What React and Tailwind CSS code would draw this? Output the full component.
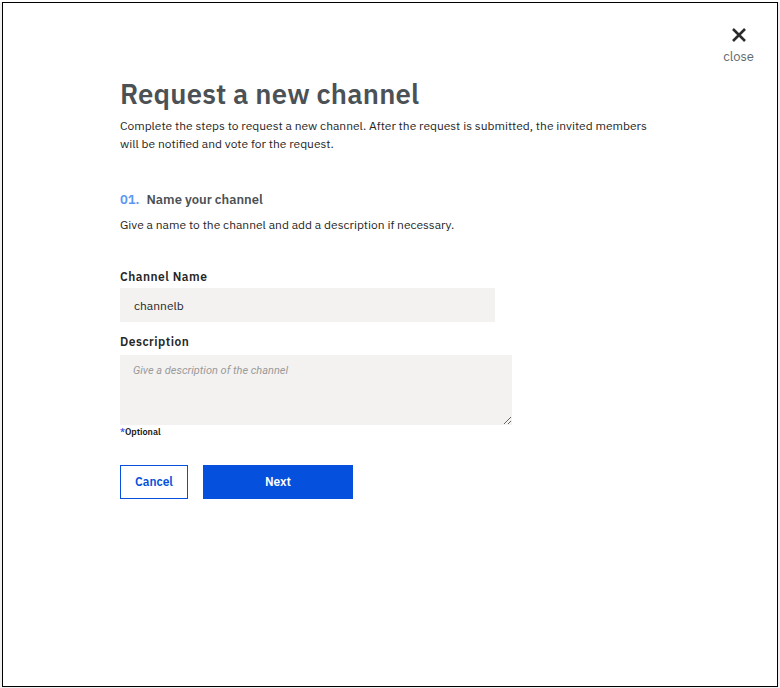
import { useState } from "react";

const font = { fontFamily: "'IBM Plex Sans', 'Noto Sans', Roboto, sans-serif" };

const App = () => {
  const [name, setName] = useState("channelb");
  const [desc, setDesc] = useState("");

  return (
    <div className="w-[780px] h-[688px] bg-[#f0f0f0]" style={font}>
      <div className="relative ml-[2px] mt-[2px] w-[776px] h-[685px] border border-black bg-white">
        {/* close */}
        <button className="absolute right-[23px] top-[22px] flex flex-col items-center text-[#5f6a70]">
          <svg width="16" height="16" viewBox="0 0 16 16" className="mt-[2px]">
            <path d="M2 2 L14 14 M14 2 L2 14" stroke="#2b2b2b" strokeWidth="2.6" />
          </svg>
          <span className="text-[13px] leading-[14px] mt-[7px]">close</span>
        </button>

        <div className="pl-[117px] pt-[74px]">
          <h1 className="text-[27.5px] leading-[34px] font-semibold tracking-[0.2px] text-[#4b5155]">Request a new channel</h1>
          <p className="mt-[6px] w-[540px] text-[12px] leading-[18px] text-[#262626]">
            Complete the steps to request a new channel. After the request is submitted, the invited members will be notified and vote for the request.
          </p>

          <div className="mt-[38px] flex items-baseline gap-[7px] text-[13px] font-semibold leading-[18px]">
            <span className="text-[#5a98f2]">01.</span>
            <span className="text-[#4b5155]">Name your channel</span>
          </div>
          <p className="mt-[8px] text-[12px] leading-[16px] text-[#262626]">
            Give a name to the channel and add a description if necessary.
          </p>

          <form onSubmit={(e) => e.preventDefault()}>
            <label className="mt-[36px] block text-[12px] font-semibold leading-[16px] tracking-[0.5px] text-[#262626]">
              Channel Name
            </label>
            <input
              type="text"
              value={name}
              onChange={(e) => setName(e.target.value)}
              className="mt-[3px] block w-[375px] h-[34px] bg-[#f3f2f1] px-[14px] text-[12px] text-[#262626] outline-none"
            />

            <label className="mt-[12px] block text-[12px] font-semibold leading-[16px] tracking-[0.5px] text-[#262626]">
              Description
            </label>
            <textarea
              value={desc}
              onChange={(e) => setDesc(e.target.value)}
              placeholder="Give a description of the channel"
              className="mt-[5px] block w-[392px] h-[70px] bg-[#f3f2f1] px-[13px] py-[8px] text-[11px] text-[#262626] outline-none placeholder:italic placeholder:text-[#9a9a9a]"
              style={{ fontFamily: "Roboto, sans-serif" }}
            />
            <div className="mt-[1px] text-[9px] leading-[12px] font-semibold text-[#161616]">
              <span className="text-[#3d5be0]">*</span>Optional
            </div>

            <div className="mt-[27px] flex gap-[15px]">
              <button
                type="button"
                className="w-[68px] h-[34px] border border-[#0550dc] text-[#0550dc] text-[12px] font-semibold bg-white"
              >
                Cancel
              </button>
              <button
                type="submit"
                className="w-[150px] h-[34px] bg-[#0550dc] text-white text-[12px] font-semibold"
              >
                Next
              </button>
            </div>
          </form>
        </div>
      </div>
    </div>
  );
};

export default App;
